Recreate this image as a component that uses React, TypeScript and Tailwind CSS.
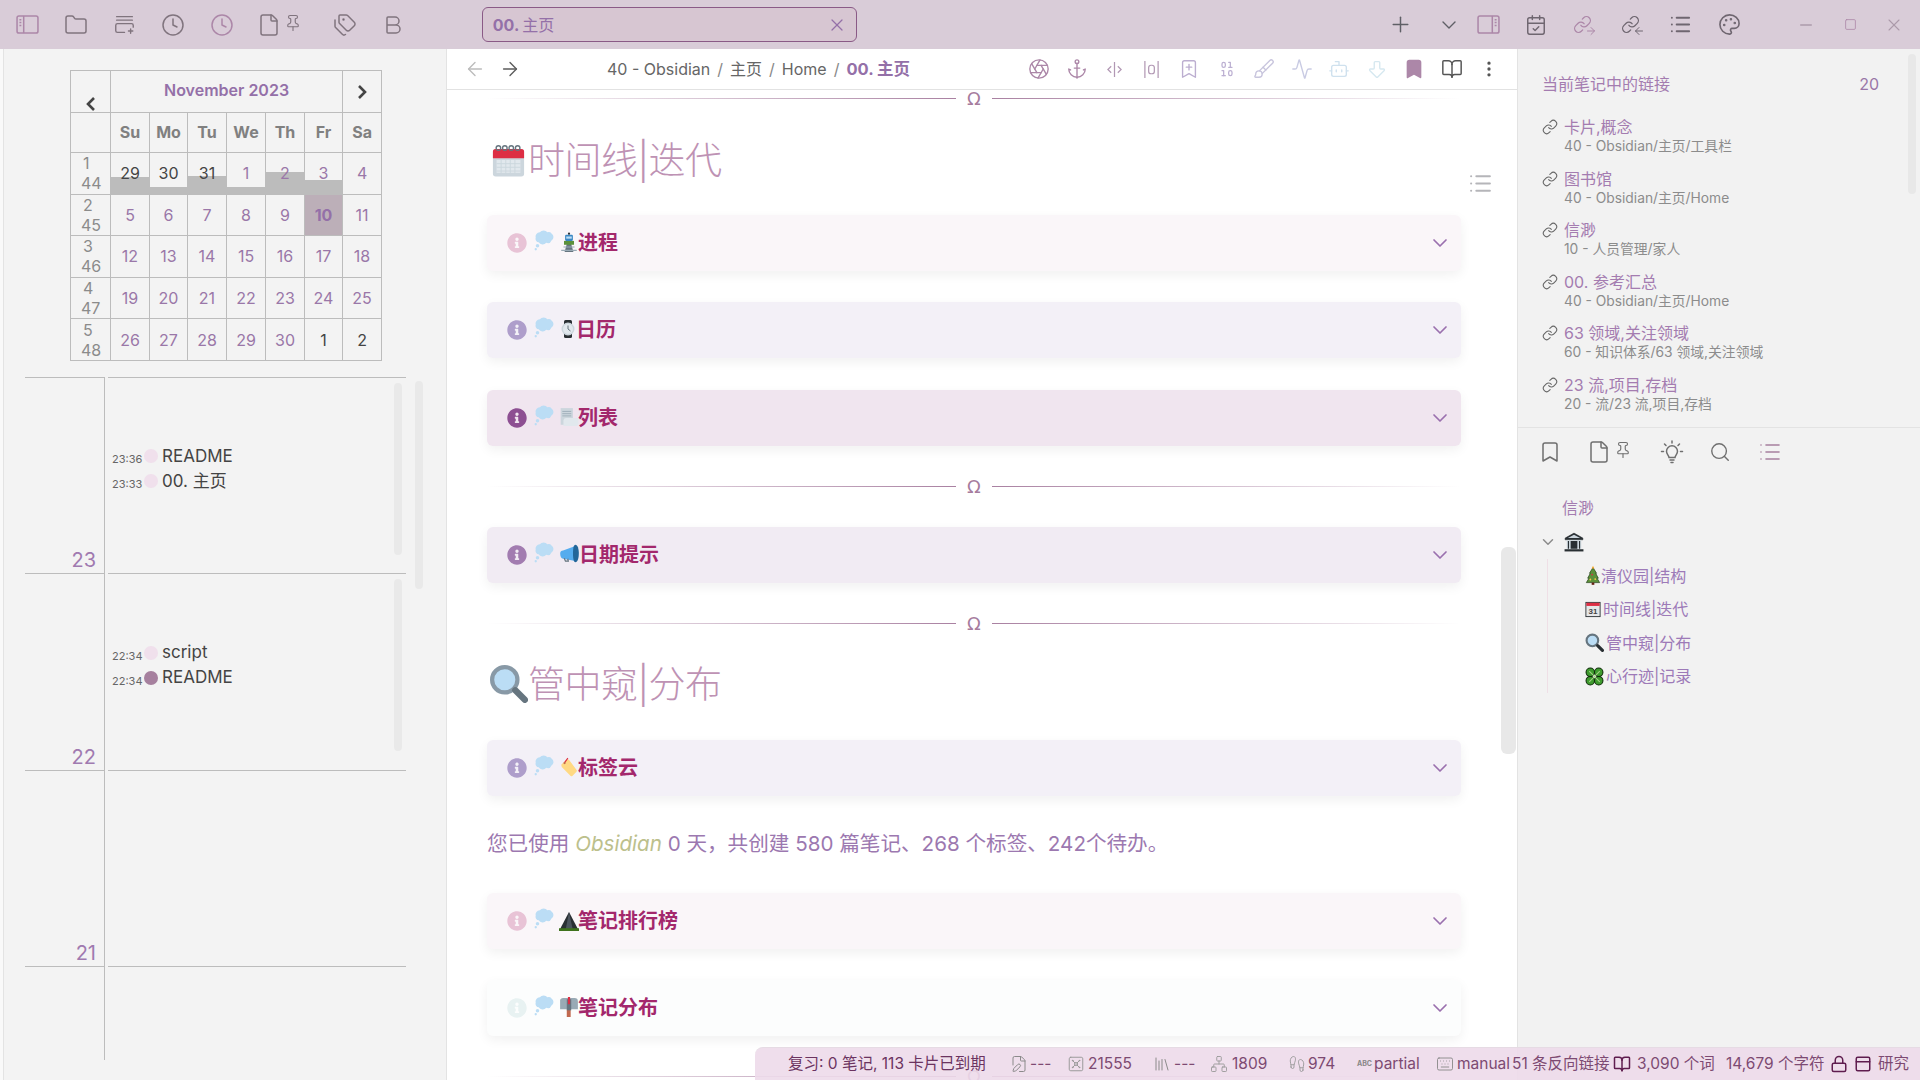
import React from "react";
import {
  Folder, Clock, File, Pin, Tags, Bold, Plus, ChevronDown, CalendarCheck, Link, ArrowRight, ArrowLeft, List, Palette, Minus, Square, X,
  Aperture, Anchor, BookmarkPlus, Binary, Brush, Activity, Bot, ArrowBigDown, Bookmark, BookOpen, MoreVertical, Search,
  Network, Lock, PanelTop, FilePen, Library, Keyboard, Footprints, Vault,
} from "lucide-react";
import { FaInfoCircle } from "react-icons/fa";

const Bubble = () => (
  <svg viewBox="0 0 36 36" className="w-[21px] h-[21px] shrink-0 -mt-[5px]">
    <path fill="#BBDDF5" d="M30 6a6 6 0 0 0-7-2 8 8 0 0 0-13 0 7 7 0 0 0-7 9 6 6 0 0 0 5 8 8 8 0 0 0 13 1 7 7 0 0 0 9-4 7 7 0 0 0 0-12z" />
    <circle cx="6" cy="27" r="3" fill="#BBDDF5" /><circle cx="3" cy="33" r="2" fill="#BBDDF5" />
  </svg>
);
const Train = () => (
  <svg viewBox="0 0 36 36" className="w-[20px] h-[24px] shrink-0 -mt-[3px]">
    <path fill="#66757F" d="M10 36 15 18h6l5 18z" /><path fill="#99AAB5" d="M8 26h20v2H8zM4 32h28v2H4z" />
    <path fill="#5C913B" d="M9 16h18v7H9z" /><rect x="11" y="5" width="14" height="11" rx="2" fill="#3B88C3" /><path fill="#BBDDF5" d="M13 8h10v4H13z" /><circle cx="18" cy="3" r="2" fill="#292F33" />
  </svg>
);
const Watch = () => (
  <svg viewBox="0 0 36 36" className="w-[18px] h-[24px] shrink-0 -mt-[2px]">
    <rect x="10" y="0" width="16" height="36" rx="3" fill="#292F33" /><circle cx="18" cy="18" r="13" fill="#CCD6DD" /><circle cx="18" cy="18" r="10" fill="#E1E8ED" /><path stroke="#66757F" strokeWidth="2" fill="none" d="M18 11v7l5 4" />
  </svg>
);
const Doc = () => (
  <svg viewBox="0 0 36 36" className="w-[20px] h-[22px] shrink-0 -mt-[3px]">
    <path fill="#CCD6DD" d="M3 2h22v30H3z" /><path stroke="#99AAB5" strokeWidth="1.5" d="M6 8h16M6 12h16M6 16h16" /><path fill="#E1E8ED" d="M8 24a5 5 0 0 1 5-4h22v10a4 4 0 0 1-4 4H8z" />
  </svg>
);
const Mega = () => (
  <svg viewBox="0 0 36 36" className="w-[21px] h-[21px] shrink-0 -mt-[3px]">
    <path fill="#55ACEE" d="M2 18c0-3 2-5 5-5l21-8v26l-21-4c-3 0-5-4-5-9z" /><path fill="#226699" d="M28 3c4 0 6 7 6 15s-2 15-6 15c-3 0-4-7-4-15s1-15 4-15z" /><path fill="none" stroke="#66757F" strokeWidth="2" d="M9 26l2 5h5l-1-4" />
  </svg>
);
const TagE = () => (
  <svg viewBox="0 0 36 36" className="w-[20px] h-[24px] shrink-0 -mt-[3px]">
    <path fill="#FFD983" d="M4 14 14 4l4 1 14 19a3 3 0 0 1-1 3l-7 7a3 3 0 0 1-3 0L5 18z" /><path fill="none" stroke="#DD2E44" strokeWidth="2" d="M10 10 16 2" /><circle cx="10" cy="11" r="2" fill="#C1694F" />
  </svg>
);
const Mountain = () => (
  <svg viewBox="0 0 36 36" className="w-[20px] h-[22px] shrink-0 -mt-[1px]">
    <path fill="#292F33" d="M18 2 35 34H1z" /><path fill="#4B545D" d="m18 2 7 32H12z" /><path fill="#3E721D" d="M0 31h36v5H0z" />
  </svg>
);
const Mailbox = () => (
  <svg viewBox="0 0 36 36" className="w-[20px] h-[24px] shrink-0 -mt-[2px]">
    <path fill="#C1694F" d="M14 22h7v14h-7z" /><path fill="#99AAB5" d="M2 5a6 6 0 0 1 6-3h20a6 6 0 0 1 6 6v14H2z" /><path fill="#66757F" d="M14 4h8v20h-8z" /><path fill="#DD2E44" d="M16 0h4v13h-4z" />
  </svg>
);
const BigCal = () => (
  <svg viewBox="0 0 36 36" className="w-[33px] h-[40px] shrink-0">
    <rect x="1" y="6" width="34" height="30" rx="3" fill="#CCD6DD" /><path fill="#DD2E44" d="M1 9a3 3 0 0 1 3-3h28a3 3 0 0 1 3 3v7H1z" />
    <g fill="#E1E8ED"><path d="M5 18h26v14H5z" /></g>
    <path stroke="#CCD6DD" strokeWidth="1" d="M5 22h26M5 26h26M5 30h26M10 18v15M15 18v15M20 18v15M25 18v15" />
    <g fill="none" stroke="#66757F" strokeWidth="1.5"><circle cx="7" cy="5" r="2.5" /><circle cx="14" cy="5" r="2.5" /><circle cx="21" cy="5" r="2.5" /><circle cx="28" cy="5" r="2.5" /></g>
  </svg>
);
const Mag = () => (
  <svg viewBox="0 0 36 36" className="w-[38px] h-[38px] shrink-0">
    <circle cx="14" cy="14" r="12" fill="#BBDDF5" stroke="#8899A6" strokeWidth="4" /><path stroke="#66757F" strokeWidth="6" strokeLinecap="round" d="m24 24 9 9" />
  </svg>
);
const Bank = () => (
  <svg viewBox="0 0 36 36" className="w-[20px] h-[20px] shrink-0">
    <path fill="#292F33" stroke="#292F33" d="M18 2 34 11v3H2v-3z" /><path fill="#CCD6DD" d="M18 5 29 11H7zM5 15h26v15H5z" /><path fill="#292F33" d="M12 16h12v14H12zM7 16h2v14H7zM27 16h2v14h-2z" /><path fill="#292F33" d="M1 31h34v4H1z" />
  </svg>
);
const Tree = () => (
  <svg viewBox="0 0 36 44" className="w-[16px] h-[21px] shrink-0">
    <path fill="#5C913B" stroke="#1d3a10" strokeWidth="1.5" d="M18 4 26 17h-2l6 11h-3l6 10H3l6-10H6l6-11h-2z" /><circle cx="16" cy="20" r="2" fill="#DD2E44" /><circle cx="23" cy="30" r="2" fill="#FFCC4D" /><circle cx="12" cy="31" r="2" fill="#FFCC4D" /><path fill="#FFAC33" d="m18 0 3 6h-6z" /><path fill="#662113" d="M15 38h6v5h-6z" />
  </svg>
);
const Cal31 = () => (
  <svg viewBox="0 0 36 36" className="w-[16px] h-[19px] shrink-0">
    <rect x="2" y="2" width="32" height="32" fill="#E6E7E8" stroke="#292F33" strokeWidth="2" /><path fill="#DD2E44" d="M3 3h30v7H3z" /><text x="18" y="29" fontSize="18" fontFamily="Liberation Sans" fontWeight="700" textAnchor="middle" fill="#444">31</text>
  </svg>
);
const SmallMag = () => (
  <svg viewBox="0 0 36 36" className="w-[19px] h-[19px] shrink-0">
    <circle cx="14" cy="14" r="11" fill="#BBDDF5" stroke="#66757F" strokeWidth="4" /><path stroke="#292F33" strokeWidth="6" strokeLinecap="round" d="m24 24 9 9" />
  </svg>
);
const Clover = () => (
  <svg viewBox="0 0 36 36" className="w-[19px] h-[19px] shrink-0">
    <g fill="#3E9B2E" stroke="#0d2b08" strokeWidth="2"><circle cx="10" cy="10" r="8" /><circle cx="26" cy="10" r="8" /><circle cx="10" cy="26" r="8" /><circle cx="26" cy="26" r="8" /></g>
    <path stroke="#A6D388" strokeWidth="2" d="M8 8l20 20M28 8 8 28" />
  </svg>
);

const Sidebar = ({ right = false }: { right?: boolean }) => (
  <svg viewBox="0 0 24 20" className="w-[23px] h-[19px]" fill="none" stroke="#ac87a8" strokeWidth="1.6">
    <rect x="1" y="1" width="22" height="18" rx="2" />
    <path d={right ? "M16 1v18" : "M8 1v18"} />
    <path d={right ? "M18.5 5h2M18.5 8h2M18.5 11h2" : "M3.5 5h2M3.5 8h2M3.5 11h2"} />
  </svg>
);
const NewCard = () => (
  <svg viewBox="0 0 24 24" className="w-[21px] h-[21px]" fill="none" stroke="#80747e" strokeWidth="1.6" strokeLinecap="round">
    <path d="M3 3h18M3 7h18M12 21H4a2 2 0 0 1-2-2v-6a2 2 0 0 1 2-2h16a2 2 0 0 1 2 2v2M19 17v5M16.5 19.5h5" />
  </svg>
);
const LinkDir = ({ out }: { out: boolean }) => (
  <span className="relative flex w-[22px] h-[20px]">
    <Link size={19} stroke={out ? "#ac87a8" : "#6f6670"} strokeWidth={1.6} />
    {out ? (
      <ArrowRight size={12} stroke="#ac87a8" strokeWidth={2} className="absolute right-[-2px] bottom-[-2px]" />
    ) : (
      <ArrowLeft size={12} stroke="#6f6670" strokeWidth={2} className="absolute right-[-2px] bottom-[-2px]" />
    )}
  </span>
);
const CodeSplit = ({ c }: { c: string }) => (
  <svg viewBox="0 0 18 18" className="w-[17px] h-[17px]" fill="none" stroke={c} strokeWidth="1.3"><path d="M9 1v16M5.5 5.5 2 9l3.5 3.5M12.5 5.5 16 9l-3.5 3.5" /></svg>
);
const ZeroBars = ({ c }: { c: string }) => (
  <svg viewBox="0 0 18 20" className="w-[17px] h-[19px]" fill="none" stroke={c} strokeWidth="1.3"><path d="M2 1v18M16 1v18" /><rect x="6" y="5.5" width="6" height="9" rx="2.5" /></svg>
);
const Bulb = () => (
  <svg viewBox="0 0 24 24" className="w-[24px] h-[24px] shrink-0" fill="none" stroke="#6f6f6f" strokeWidth="1.5" strokeLinecap="round">
    <path d="M9 17.5c0-2-2.5-3.2-2.5-6.2a5.5 5.5 0 0 1 11 0c0 3-2.500 4.200-2.500 6.200zM10 20h4M11 22.500h2" />
    <path d="M12 1v2M4.500 4l1.500 1.500M19.500 4 18 5.500M1.500 11.500h2M20.500 11.500h2" />
  </svg>
);

const Slot = ({ w = "w-[48.7px]", children, className = "justify-center" }: { w?: string; children: React.ReactNode; className?: string }) => (
  <div className={`${w} flex items-center shrink-0 ${className}`}>{children}</div>
);

const Hr = ({ className = "" }: { className?: string }) => (
  <div className={`relative h-px shrink-0 bg-[linear-gradient(to_right,transparent,#a67c9e_50%,transparent)] ${className}`}>
    <span className="absolute left-1/2 -translate-x-1/2 -top-[7px] w-[36px] h-[15px] bg-white flex items-center justify-center text-[18px] leading-none text-[#a67c9e] font-['DejaVu_Sans',sans-serif]">Ω</span>
  </div>
);

const Callout = ({ bg, info, icon, title, className = "" }: { bg: string; info: string; icon: React.ReactNode; title: string; className?: string }) => (
  <div className={`h-[56px] shrink-0 rounded-[6px] flex items-center pl-[20px] pr-[9px] shadow-[0_4px_12px_rgba(0,0,0,0.06)] ${bg} ${className}`}>
    <FaInfoCircle size={20} className={`${info} shrink-0 mr-[7px]`} />
    <Bubble />
    <span className="w-[4px] shrink-0" />
    {icon}
    <span className="text-[20px] font-bold text-[#a3286c] leading-none -ml-[1px]">{title}</span>
    <ChevronDown size={24} className="ml-auto text-[#9a70ae]" strokeWidth={1.7} />
  </div>
);

const weeks = [
  { w: ["1", "44"], days: [["29", 17, 1], ["30", 7, 1], ["31", 18, 1], ["1", 7, 0], ["2", 22, 0], ["3", 14, 0], ["4", 0, 0]] },
  { w: ["2", "45"], days: [["5", 0, 0], ["6", 0, 0], ["7", 0, 0], ["8", 0, 0], ["9", 0, 0], ["10", 0, 2], ["11", 0, 0]] },
  { w: ["3", "46"], days: [["12", 0, 0], ["13", 0, 0], ["14", 0, 0], ["15", 0, 0], ["16", 0, 0], ["17", 0, 0], ["18", 0, 0]] },
  { w: ["4", "47"], days: [["19", 0, 0], ["20", 0, 0], ["21", 0, 0], ["22", 0, 0], ["23", 0, 0], ["24", 0, 0], ["25", 0, 0]] },
  { w: ["5", "48"], days: [["26", 0, 0], ["27", 0, 0], ["28", 0, 0], ["29", 0, 0], ["30", 0, 0], ["1", 0, 1], ["2", 0, 1]] },
] as { w: string[]; days: [string, number, number][] }[];

const Calendar = () => (
  <table className="table-fixed border-collapse w-[312px] ml-[66px] mt-[21px] text-[16px] text-center">
    <colgroup>
      <col className="w-[40px]" /><col className="w-[39px]" /><col className="w-[38px]" /><col className="w-[39px]" /><col className="w-[39px]" /><col className="w-[39px]" /><col className="w-[38px]" /><col className="w-[39px]" />
    </colgroup>
    <tbody>
      <tr className="h-[42px]">
        <td className="border border-[#bcbcbc] align-bottom pb-[1px]"><span className="flex justify-center"><svg viewBox="0 0 10 14" className="w-[10px] h-[14px]" fill="none" stroke="#444" strokeWidth="2.6"><path d="M8 1 2 7l6 6" /></svg></span></td>
        <td colSpan={6} className="border border-[#bcbcbc] font-semibold text-[#9470a8] align-middle pb-[4px]">November 2023</td>
        <td className="border border-[#bcbcbc]"><span className="flex justify-center"><svg viewBox="0 0 10 14" className="w-[10px] h-[14px]" fill="none" stroke="#444" strokeWidth="2.6"><path d="m2 1 6 6-6 6" /></svg></span></td>
      </tr>
      <tr className="h-[40px]">
        <td className="border border-[#bcbcbc]" />
        {["Su", "Mo", "Tu", "We", "Th", "Fr", "Sa"].map((d) => (
          <td key={d} className="border border-[#bcbcbc] font-bold text-[#808080] pb-[2px]">{d}</td>
        ))}
      </tr>
      {weeks.map((r) => (
        <tr key={r.w[1]} className="h-[41.6px]">
          <td className="border border-[#bcbcbc] p-0 text-[#8b8b8b] leading-[20px] text-left">
            <div className="pl-[12px]">{r.w[0]}</div>
            <div className="pl-[10px]">{r.w[1]}</div>
          </td>
          {r.days.map(([d, bar, kind], i) => (
            <td key={i} className={`border border-[#bcbcbc] p-0 relative ${kind === 2 ? "bg-[#bcafb8] font-bold text-[#9470a8]" : kind === 1 ? "text-[#444]" : "text-[#9a77a8]"}`}>
              {bar > 0 && <span className="absolute inset-x-0 bottom-0 bg-[#bcbcbc]" style={{ height: bar }} />}
              <span className="relative">{d}</span>
            </td>
          ))}
        </tr>
      ))}
    </tbody>
  </table>
);

const TimeRow = ({ day, items, bar = true }: { day: string; items: [string, string, boolean][]; bar?: boolean }) => (
  <div className="flex h-[196.4px] shrink-0">
    <div className="w-[80px] border-t border-r border-[#bcbcbc] flex items-end justify-end pr-[8px] text-[20px] leading-[26px] text-[#a07ab0]">{day}</div>
    <div className="relative ml-[3px] w-[298px] border-t border-[#bcbcbc] pt-[66px] pl-[4px]">
      {items.map(([t, n, dark], i) => (
        <div key={i} className="h-[25px] flex items-center">
          <span className="w-[30px] shrink-0 text-[11px] text-[#666] pt-[6px]">{t}</span>
          <span className={`w-[14px] h-[14px] shrink-0 rounded-full ml-[2px] mr-[4px] ${dark ? "bg-[#a6809e]" : "bg-[#f0e0ec]"}`} />
          <span className="text-[17px] text-[#444]">{n}</span>
        </div>
      ))}
      {bar && <span className="absolute right-[4px] top-[5px] w-[8px] h-[172px] rounded bg-[#e9e9e9]" />}
    </div>
  </div>
);

const links: [string, string][] = [
  ["卡片,概念", "40 - Obsidian/主页/工具栏"],
  ["图书馆", "40 - Obsidian/主页/Home"],
  ["信渺", "10 - 人员管理/家人"],
  ["00. 参考汇总", "40 - Obsidian/主页/Home"],
  ["63 领域,关注领域", "60 - 知识体系/63 领域,关注领域"],
  ["23 流,项目,存档", "20 - 流/23 流,项目,存档"],
];

const tools: [any, string, string?, number?][] = [
  [Aperture, "#ac87a8", "", 22], [Anchor, "#ac87a8", "", 22], [null, "#b298b4", "code"], [null, "#b298b4", "zero"],
  [BookmarkPlus, "#bcaed0", "", 22], [Binary, "#bcb0d2", "", 20], [Brush, "#c8c5dd", "", 22], [Activity, "#c9cbe3", "", 22], [Bot, "#cfe1ee", "", 22], [ArrowBigDown, "#d6e8f0", "", 22],
];

const S = ({ w, children, className = "" }: { w: string; children?: React.ReactNode; className?: string }) => (
  <span className={`${w} shrink-0 flex items-center ${className}`}>{children}</span>
);

export default function App() {
  return (
    <div className="relative w-[1920px] h-[1080px] overflow-hidden flex flex-col bg-white font-['Inter','Noto_Sans_CJK_SC',sans-serif]">
      {/* title bar */}
      <div className="h-[49px] shrink-0 bg-[#d9ccd8] flex items-center">
        <div className="w-[3px] shrink-0" />
        <Slot><Sidebar /></Slot>
        <Slot><Folder size={24} stroke="#80747e" strokeWidth={1.5} /></Slot>
        <Slot><NewCard /></Slot>
        <Slot><Clock size={24} stroke="#80747e" strokeWidth={1.5} /></Slot>
        <Slot><Clock size={24} stroke="#ac87a8" strokeWidth={1.5} /></Slot>
        <Slot w="w-[74px]" className="pl-[11px]"><File size={24} stroke="#80747e" strokeWidth={1.5} /><Pin size={18} stroke="#80747e" strokeWidth={1.5} className="ml-[3px] -mt-[3px]" /></Slot>
        <Slot><Tags size={24} stroke="#80747e" strokeWidth={1.5} /></Slot>
        <Slot><Bold size={24} stroke="#80747e" strokeWidth={1.5} /></Slot>
        <div className="w-[64px] shrink-0" />
        <div className="w-[375px] h-[35px] shrink-0 rounded-[6px] border border-[#8a5a86] bg-[#d7c6d2] flex items-center px-[10px] text-[16px] text-[#9470a8]">
          <span className="font-bold">00.</span><span className="ml-[3px]">主页</span>
          <X size={20} className="ml-auto text-[#9470a8] -mr-[1px]" strokeWidth={1.5} />
        </div>
        <div className="flex-1" />
        <Slot><Plus size={25} stroke="#5f5f66" strokeWidth={1.4} /></Slot>
        <Slot><ChevronDown size={24} stroke="#5f5f66" strokeWidth={1.4} /></Slot>
        <Slot w="w-[30px]"><Sidebar right /></Slot>
        <Slot w="w-[56px]" className="justify-center pl-[9px]"><CalendarCheck size={22} stroke="#6f6670" strokeWidth={1.6} /></Slot>
        <Slot><LinkDir out /></Slot>
        <Slot><LinkDir out={false} /></Slot>
        <Slot><List size={23} stroke="#6f6670" strokeWidth={2} /></Slot>
        <Slot><Palette size={23} stroke="#6f6670" strokeWidth={1.7} /></Slot>
        <div className="w-[30px] shrink-0" />
        <Slot w="w-[44px]"><Minus size={18} stroke="#ac9aaa" /></Slot>
        <Slot w="w-[44px]"><Square size={13} stroke="#ac87a8" strokeWidth={1.5} /></Slot>
        <Slot w="w-[44px]"><X size={20} stroke="#ac9aaa" strokeWidth={1.3} /></Slot>
        <div className="w-[4px] shrink-0" />
      </div>

      <div className="flex flex-1 min-h-0">
        <div className="w-[4px] shrink-0 bg-[#f9f9f9] border-r border-[#e3e3e3]" />
        {/* left panel */}
        <div className="relative w-[443px] shrink-0 bg-[#f3f3f3] border-r border-[#e3e3e3] flex flex-col">
          <Calendar />
          <div className="relative ml-[21px] mt-[16px] flex flex-col">
            <TimeRow day="23" items={[["23:36", "README", false], ["23:33", "00. 主页", false]]} />
            <TimeRow day="22" items={[["22:34", "script", false], ["22:34", "README", true]]} />
            <TimeRow day="21" items={[]} bar={false} />
            <div className="flex h-[94px]">
              <div className="w-[80px] border-t border-r border-[#bcbcbc]" />
              <div className="ml-[3px] w-[298px] border-t border-[#bcbcbc]" />
            </div>
          </div>
          <span className="absolute left-[411px] top-[332px] w-[8px] h-[208px] rounded bg-[#e9e9e9]" />
        </div>

        {/* main */}
        <div className="relative w-[1070px] shrink-0 bg-white flex flex-col overflow-hidden">
          <div className="h-[41px] shrink-0 border-b border-[#e2e2e2] flex items-center">
            <ArrowLeft size={22} stroke="#bcbcbc" strokeWidth={1.5} className="ml-[17px]" />
            <ArrowRight size={22} stroke="#5c5c5c" strokeWidth={1.5} className="ml-[13px]" />
            <div className="ml-[86px] text-[16px] text-[#666] flex items-center whitespace-nowrap">
              <span>40 - Obsidian</span><span className="mx-[7px] text-[#888]">/</span><span>主页</span><span className="mx-[7px] text-[#888]">/</span><span>Home</span><span className="mx-[7px] text-[#888]">/</span>
              <span className="font-bold text-[#9470a8] text-[16.5px]">00. 主页</span>
            </div>
            <div className="ml-auto flex items-center pr-[9px]">
              {tools.map(([I, c, k, sz], i) => (
                <Slot key={i} w="w-[37.5px]">
                  {k === "code" ? <CodeSplit c={c} /> : k === "zero" ? <ZeroBars c={c} /> : <I size={sz} stroke={c} strokeWidth={1.5} />}
                </Slot>
              ))}
              <Slot w="w-[37.5px]"><Bookmark size={22} fill="#ac87a8" stroke="#ac87a8" /></Slot>
              <Slot w="w-[37.5px]"><BookOpen size={22} stroke="#555" strokeWidth={1.6} /></Slot>
              <Slot w="w-[37.5px]"><MoreVertical size={20} stroke="#555" strokeWidth={2} /></Slot>
            </div>
          </div>
          <div className="relative flex-1 flex flex-col pl-[40px] pr-[56px]">
            <Hr className="mt-[8px]" />
            <div className="mt-[31px] h-[60px] shrink-0 flex items-center pl-[5px] text-[37px] tracking-[-0.5px] font-light text-[#be92b4] leading-none">
              <BigCal /><span className="ml-[3px]">时间线|迭代</span>
            </div>
            <Callout className="mt-[25px]" bg="bg-[#faf6f9]" info="text-[#e8c3d6]" icon={<Train />} title="进程" />
            <Callout className="mt-[31px]" bg="bg-[#f3f0f7]" info="text-[#ae9ecb]" icon={<Watch />} title="日历" />
            <Callout className="mt-[32px]" bg="bg-[#f0e5ef]" info="text-[#8d4f92]" icon={<Doc />} title="列表" />
            <Hr className="mt-[40px]" />
            <Callout className="mt-[40px]" bg="bg-[#f1ebf3]" info="text-[#a27cb0]" icon={<Mega />} title="日期提示" />
            <Hr className="mt-[40px]" />
            <div className="mt-[30px] h-[60px] shrink-0 flex items-center pl-[3px] text-[37px] tracking-[-0.5px] font-light text-[#be92b4] leading-none">
              <Mag /><span>管中窥|分布</span>
            </div>
            <Callout className="mt-[26px]" bg="bg-[#f3f0f7]" info="text-[#ae9ecb]" icon={<TagE />} title="标签云" />
            <p className="mt-[28px] h-[40px] shrink-0 flex items-center text-[20.6px] text-[#9c78b0] whitespace-pre">
              您已使用 <em className="text-[#bcc08c]">Obsidian</em> 0 天，共创建 580 篇笔记、268 个标签、242个待办。
            </p>
            <Callout className="mt-[29px]" bg="bg-[#faf6f9]" info="text-[#e8c3d6]" icon={<Mountain />} title="笔记排行榜" />
            <Callout className="mt-[31px]" bg="bg-[#fcfdfd]" info="text-[#e8f2f2]" icon={<Mailbox />} title="笔记分布" />
            <Hr className="mt-[40px]" />
          </div>
          <List size={25} stroke="#b5b5b9" strokeWidth={2} className="absolute left-[1021px] top-[122px]" />
          <span className="absolute right-[1px] top-[498px] w-[15px] h-[207px] rounded-[6px] bg-[#e8e8e8]" />
        </div>

        {/* right panel */}
        <div className="relative flex-1 min-w-0 bg-[#f2f2f2] border-l border-[#e3e3e3] flex flex-col">
          <div className="h-[379px] shrink-0 border-b border-[#e3e3e3] flex flex-col pl-[24px] pr-[41px]">
            <div className="mt-[23px] h-[24px] flex items-center justify-between text-[16px] text-[#a47cb0]">
              <span>当前笔记中的链接</span><span className="text-[#9a77a8]">20</span>
            </div>
            <div className="mt-[19px] flex flex-col">
              {links.map(([t, s]) => (
                <div key={t} className="h-[51.5px] flex">
                  <Link size={16} stroke="#666" strokeWidth={1.6} className="mt-[4px] shrink-0" />
                  <div className="ml-[6px] flex flex-col">
                    <span className="text-[16px] leading-[24px] text-[#a47cb0]">{t}</span>
                    <span className="text-[13.8px] leading-[15px] text-[#8c8c8c] whitespace-nowrap">{s}</span>
                  </div>
                </div>
              ))}
            </div>
          </div>
          <div className="h-[48px] shrink-0 flex items-center text-[#6f6f6f]">
            <Bookmark size={24} strokeWidth={1.5} className="ml-[20px]" />
            <File size={24} strokeWidth={1.5} className="ml-[25px]" />
            <Pin size={18} strokeWidth={1.5} className="ml-[3px] -mt-[4px]" />
            <span className="ml-[28px] flex"><Bulb /></span>
            <Search size={22} strokeWidth={1.5} className="ml-[25px]" />
            <List size={24} stroke="#a6809e" strokeWidth={1.6} className="ml-[27px]" />
          </div>
          <div className="mt-[20px] ml-[44px] text-[16px] leading-[24px] text-[#a47cb0]">信渺</div>
          <div className="mt-[10px] ml-[21px] flex items-center h-[24px]">
            <ChevronDown size={18} stroke="#8c8c8c" strokeWidth={2} />
            <span className="ml-[7px]"><Bank /></span>
          </div>
          <div className="ml-[29px] mt-[5px] w-fit border-l border-[#efdfe6] pl-[37px] flex flex-col text-[16px] text-[#9d7ab8]">
            <div className="h-[33.5px] flex items-center"><Tree /><span>清仪园|结构</span></div>
            <div className="h-[33.5px] flex items-center"><Cal31 /><span className="ml-[2px]">时间线|迭代</span></div>
            <div className="h-[33.5px] flex items-center"><SmallMag /><span className="ml-[2px]">管中窥|分布</span></div>
            <div className="h-[33.5px] flex items-center"><Clover /><span className="ml-[2px]">心行迹|记录</span></div>
          </div>
          <span className="absolute right-[4px] top-[5px] w-[8px] h-[140px] rounded bg-[#e8e8e8]" />
        </div>
      </div>

      {/* status bar */}
      <div className="absolute left-[755px] right-0 bottom-0 h-[33px] rounded-tl-[8px] bg-[#eddaea]/90 border-t border-[#e6dbe4] flex items-center text-[15.5px] text-[#7d4a72] whitespace-nowrap">
        <S w="w-[255px]" className="pl-[33px] text-[#6b3360]">复习: 0 笔记, 113 卡片已到期</S>
        <FilePen size={18} stroke="#888" strokeWidth={1.3} className="shrink-0" />
        <S w="w-[39px]" className="pl-[2px]">---</S>
        <Vault size={18} stroke="#999" strokeWidth={1.3} className="shrink-0" />
        <S w="w-[68px]" className="pl-[3px]">21555</S>
        <Library size={18} stroke="#888" strokeWidth={1.3} className="shrink-0" />
        <S w="w-[39px]" className="pl-[3px]">---</S>
        <Network size={18} stroke="#999" strokeWidth={1.2} className="shrink-0" />
        <S w="w-[60px]" className="pl-[4px]">1809</S>
        <Footprints size={18} stroke="#999" strokeWidth={1.2} className="shrink-0" />
        <S w="w-[51px]" className="pl-[2px]">974</S>
        <span className="text-[7px] text-[#888] w-[14px] shrink-0 font-bold">ABC</span>
        <S w="w-[65px]" className="pl-[3px]">partial</S>
        <Keyboard size={18} stroke="#888" strokeWidth={1.2} className="shrink-0" />
        <S w="w-[58px]" className="pl-[3px]">manual</S>
        <S w="w-[101px]">51 条反向链接</S>
        <BookOpen size={18} stroke="#5f1d4f" strokeWidth={2} className="shrink-0" />
        <S w="w-[95px]" className="pl-[6px]">3,090 个词</S>
        <S w="w-[104px]">14,679 个字符</S>
        <Lock size={18} stroke="#5f1d4f" strokeWidth={2} className="shrink-0" />
        <PanelTop size={18} stroke="#5f1d4f" strokeWidth={2} className="ml-[6px] shrink-0" />
        <S w="w-[37px]" className="pl-[6px]">研究</S>
      </div>
    </div>
  );
}
